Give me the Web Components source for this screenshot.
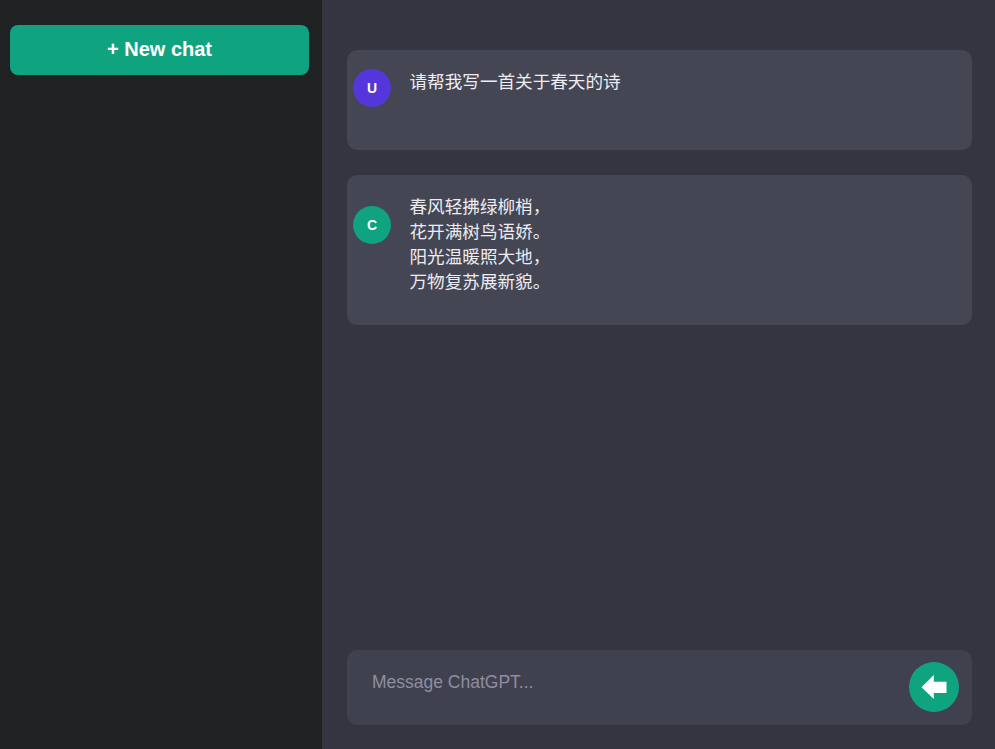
<!DOCTYPE html>
<html lang="zh">
<head>
<meta charset="utf-8">
<title>Chat</title>
<style>
html,body{margin:0;height:100%;background:#343541;}
body{font-family:"Liberation Sans","Noto Sans CJK SC",sans-serif;}
</style>
</head>
<body>
<chat-app>
  <chat-sidebar slot="sidebar"><new-chat-button>+ New chat</new-chat-button></chat-sidebar>
  <chat-message role-letter="U" avatar-color="#5436da" avatar-top="19" min-height="100">请帮我写一首关于春天的诗</chat-message>
  <chat-message role-letter="C" avatar-color="#10a37f" avatar-top="31" min-height="150">春风轻拂绿柳梢，<br>花开满树鸟语娇。<br>阳光温暖照大地，<br>万物复苏展新貌。</chat-message>
  <chat-composer slot="composer">Message ChatGPT...</chat-composer>
</chat-app>
<script>
function define(name, html, init){
  customElements.define(name, class extends HTMLElement{
    constructor(){super();this.attachShadow({mode:'open'}).innerHTML=html;}
    connectedCallback(){if(init)init(this);}
  });
}
define('chat-app',`<style>
:host{display:flex;height:100vh;overflow:hidden;background:#343541;}
main{flex:1;min-width:0;display:flex;flex-direction:column;padding:50px 23px 24px 25px;}
.log{flex:1;display:flex;flex-direction:column;gap:25px;}
</style>
<slot name="sidebar"></slot>
<main><div class="log"><slot></slot></div><slot name="composer"></slot></main>`);
define('chat-sidebar',`<style>
:host{display:block;flex:none;width:322px;box-sizing:border-box;padding:25px 13px 0 10px;background:#202123;}
</style><slot></slot>`);
define('new-chat-button',`<style>
:host{display:block;}
button{display:block;width:100%;height:50px;padding:0 0 2px;border:0;border-radius:8px;background:#10a37f;color:#fff;font:700 20px "Liberation Sans",sans-serif;cursor:pointer;}
</style><button><slot></slot></button>`);
define('chat-message',`<style>
:host{display:flex;box-sizing:border-box;padding:20px 20px 30px 6px;border-radius:10px;background:#444654;color:#ececf1;font:16px/25px "Noto Sans CJK SC","Liberation Sans",sans-serif;}
.avatar{flex:none;width:38px;height:38px;border-radius:50%;display:flex;align-items:center;justify-content:center;color:#fff;font:700 14px "Liberation Sans",sans-serif;}
.text{padding-left:18.5px;margin-top:-2px;font-size:17.6px;}
</style><div class="avatar"></div><div class="text"><slot></slot></div>`,el=>{
  const a=el.shadowRoot.querySelector('.avatar');
  a.textContent=el.getAttribute('role-letter');
  a.style.background=el.getAttribute('avatar-color');
  a.style.marginTop=(el.getAttribute('avatar-top')-20)+'px';
  el.style.minHeight=el.getAttribute('min-height')+'px';
});
define('chat-composer',`<style>
:host{display:flex;align-items:center;justify-content:space-between;box-sizing:border-box;height:75px;padding:0 13px 0 25px;border-radius:10px;background:#40414f;}
.field{color:#8e8ea0;font:17.5px "Liberation Sans",sans-serif;margin-top:-10px;}
button{flex:none;width:50px;height:50px;padding:0;margin-top:-1px;border:0;border-radius:50%;background:#10a37f;display:flex;align-items:center;justify-content:center;cursor:pointer;}
svg{display:block;}
</style><div class="field" role="textbox"><slot></slot></div>
<button aria-label="Send"><svg width="26" height="24" viewBox="0 0 26 24"><path d="M0.5 12.3 12.8 0v6.7H25.5v11.4H12.8V24z" fill="#fff"/></svg></button>`);
</script>
</body>
</html>
